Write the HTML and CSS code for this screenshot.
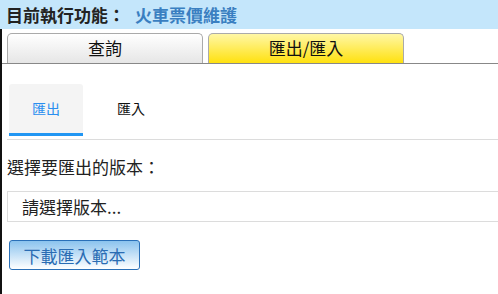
FILE: index.html
```html
<!DOCTYPE html>
<html lang="zh-Hant">
<head>
    <meta charset="UTF-8">
    <title>火車票價維護</title>
<link rel="stylesheet" href="styles.css">
</head>
<body>

<div class="title-bar">目前執行功能：<span class="func-name">火車票價維護</span></div>

<div class="page">
    <div class="tabs">
        <div class="tab">查詢</div>
        <div class="tab selected">匯出/匯入</div>
    </div>

    <div class="content">
        <div class="sub-tabs">
            <div class="sub-tab active">匯出</div>
            <div class="sub-tab">匯入</div>
        </div>

        <div class="label">選擇要匯出的版本：</div>
        <div class="select">請選擇版本...</div>

        <button class="btn">下載匯入範本</button>
    </div>
</div>

</body>
</html>
```

FILE: styles.css
```css
body {
    margin: 0;
    font-family: "Noto Sans CJK TC", "Liberation Sans", sans-serif;
    color: #222;
    background: #fff;
    overflow: hidden;
}

.title-bar {
    height: 29px;
    line-height: 29px;
    padding-left: 6px;
    background: #c4e6fb;
    font-size: 17px;
    font-weight: bold;
    color: #222;
}

.func-name {
    margin-left: 10px;
    color: #3a7fc1;
}

.page {
    border-left: 2px solid #111;
    height: 265px;
}

.tabs {
    display: flex;
    gap: 5px;
    padding: 4px 0 0 5px;
    border-bottom: 1px solid #888;
}

.tab {
    width: 194px;
    height: 29px;
    line-height: 28px;
    text-align: center;
    font-size: 17px;
    border: 1px solid #aaa;
    border-bottom: none;
    border-radius: 5px 5px 0 0;
    background: linear-gradient(#ffffff, #e6e6e6);
    color: #111;
}

.tab.selected {
    background: linear-gradient(#fff7a6, #ffe10f);
}

.content {
    padding: 20px 0 0 5px;
}

.sub-tabs {
    display: flex;
    gap: 11px;
    border-bottom: 1px solid #dcdcdc;
    padding: 0 0 3px 2px;
}

.sub-tab {
    width: 74px;
    height: 49px;
    line-height: 49px;
    text-align: center;
    font-size: 14px;
    color: #111;
    border-radius: 3px 3px 0 0;
}

.sub-tab.active {
    background: #f4f4f4;
    color: #2a8ef0;
    border-bottom: 3px solid #2196f3;
}

.label {
    margin-top: 16px;
    font-size: 17px;
    line-height: 22px;
}

.select {
    margin-top: 13px;
    height: 29px;
    line-height: 29px;
    padding-left: 14px;
    border: 1px solid #dcdcdc;
    border-right: none;
    font-size: 17px;
}

.btn {
    margin: 18px 0 0 2px;
    width: 131px;
    height: 30px;
    padding: 0;
    font-family: inherit;
    font-size: 17px;
    color: #2a6cb3;
    border: 1px solid #2a70b8;
    border-radius: 3px;
    background: linear-gradient(#8bc3ee, #ffffff);
}
```
